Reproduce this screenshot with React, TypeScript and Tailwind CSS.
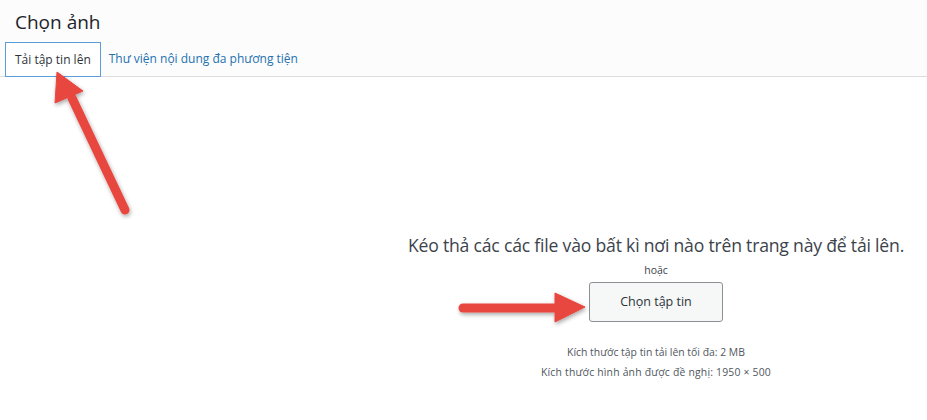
export default function App() {
	const font = { fontFamily: '"Open Sans", "Noto Sans", sans-serif' };

	return <div className="relative w-[927px] h-[420px] bg-white overflow-hidden text-[#1d2327]" style={font}>
		<div className="bg-[#fcfcfc] border-b border-[#dcdcde] h-[77px] flex flex-col">
			<h1 className="text-[19px] leading-none pl-[15px] pt-[13px] h-[42px]">Chọn ảnh</h1>
			<div className="flex items-end gap-[8px] pl-[5px]">
				<div className="h-[35px] px-[9px] flex items-center border border-[#5b9dd9] bg-white text-[12px] text-[#2c3338] -mb-px">
					Tải tập tin lên
				</div>
				<div className="h-[35px] flex items-center text-[12px] text-[#2271b1]">
					Thư viện nội dung đa phương tiện
				</div>
			</div>
		</div>

		<div className="flex">
			<div className="w-[385px] shrink-0" />
			<div className="flex-1 flex flex-col items-center pt-[156px]">
				<p className="text-[17.6px] leading-[24px] text-[#3c434a] tracking-[-0.2px]">Kéo thả các các file vào bất kì nơi nào trên trang này để tải lên.</p>
				<p className="text-[10.5px] leading-[14px] mt-[6px] text-[#3c434a]">hoặc</p>
				<button className="mt-[5px] w-[134px] h-[40px] rounded-[3px] border border-[#8c8f94] bg-[#f6f7f7] text-[12.5px] text-[#2c3338]">
					Chọn tập tin
				</button>
				<p className="mt-[23px] text-[10.4px] leading-[14px] text-[#50575e]">Kích thước tập tin tải lên tối đa: 2 MB</p>
				<p className="mt-[6px] text-[10.4px] leading-[14px] text-[#50575e] tracking-[0.2px]">Kích thước hình ảnh được đề nghị: 1950 × 500</p>
			</div>
		</div>

		<svg className="absolute inset-0 pointer-events-none" width="927" height="420" viewBox="0 0 927 420">
			<defs>
				<filter id="sh" x="-20%" y="-20%" width="140%" height="140%">
					<feDropShadow dx="1" dy="2" stdDeviation="2" floodColor="#000" floodOpacity="0.35" />
				</filter>
			</defs>
			<g filter="url(#sh)" fill="#e8473f" stroke="#e8473f">
				<line x1="125" y1="210" x2="72" y2="98" strokeWidth="9" strokeLinecap="round" />
				<polygon points="57,72 55,103 83,91" strokeWidth="1" strokeLinejoin="round" />
				<line x1="463" y1="308" x2="560" y2="308" strokeWidth="9" strokeLinecap="round" />
				<polygon points="585,307 555,293 555,322" strokeWidth="1" strokeLinejoin="round" />
			</g>
		</svg>
	</div>
}
